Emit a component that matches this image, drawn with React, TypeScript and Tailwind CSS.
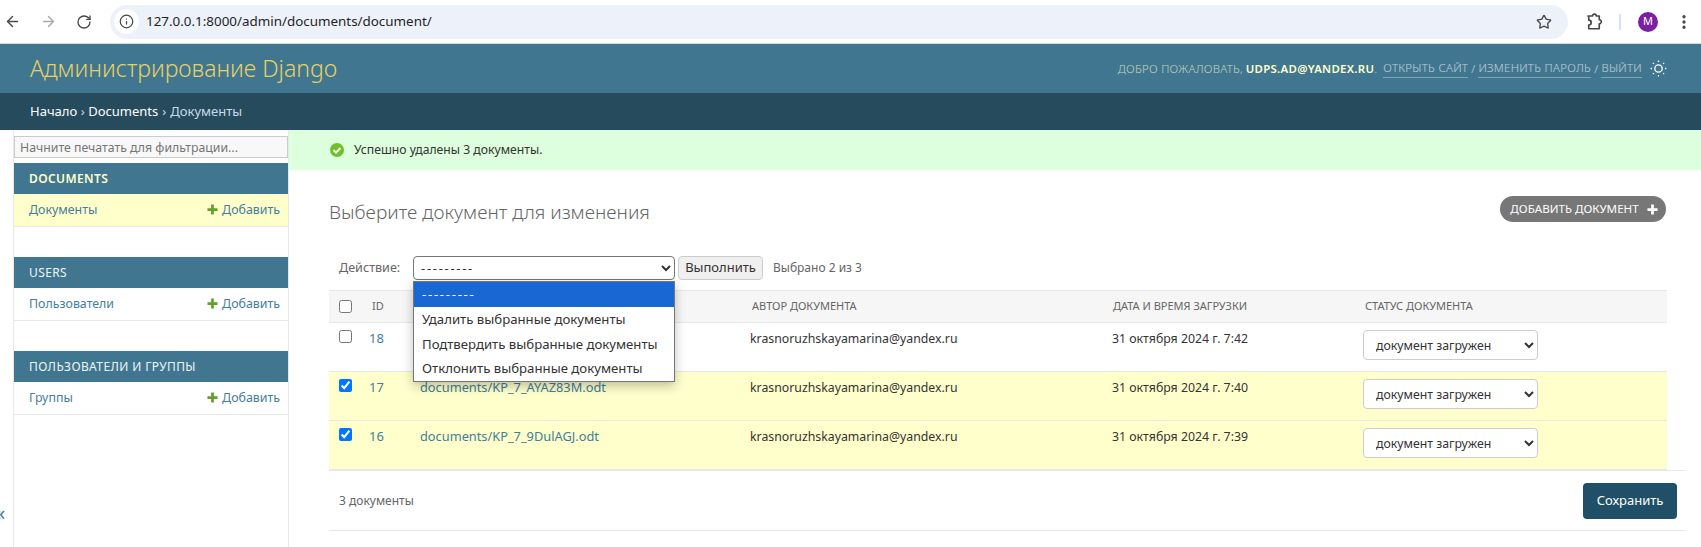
import { ArrowLeft, ArrowRight, RotateCw, Info, Star, MoreVertical } from 'lucide-react';

const rows = [
  { id: 18, file: '', date: '31 октября 2024 г. 7:42', checked: false },
  { id: 17, file: 'documents/KP_7_AYAZ83M.odt', date: '31 октября 2024 г. 7:40', checked: true },
  { id: 16, file: 'documents/KP_7_9DulAGJ.odt', date: '31 октября 2024 г. 7:39', checked: true },
];

const sections = [
  { title: 'DOCUMENTS', model: 'Документы', active: true },
  { title: 'USERS', model: 'Пользователи', active: false },
  { title: 'ПОЛЬЗОВАТЕЛИ И ГРУППЫ', model: 'Группы', active: false },
];

function PlusIcon({ color, size = 11 }: { color: string; size?: number }) {
  return (
    <svg width={size} height={size} viewBox="0 0 12 12" className="shrink-0">
      <path d="M4.5 0.5h3v4h4v3h-4v4h-3v-4h-4v-3h4z" fill={color} />
    </svg>
  );
}

function ExtensionIcon() {
  return (
    <svg width="18" height="18" viewBox="0 0 24 24" fill="none" stroke="currentColor" strokeWidth="2.2" strokeLinejoin="round" className="ml-[17px]">
      <path d="M4 4h6a2.5 2.5 0 0 1 5 0h4v5a2.5 2.5 0 0 1 0 5.5V21H5v-5a3 3 0 0 0 0-6.5V5z" />
    </svg>
  );
}

function ThemeIcon() {
  return (
    <svg width="17" height="17" viewBox="0 0 17 17" fill="none" className="ml-[8px]">
      <circle cx="8.5" cy="8.5" r="3.7" stroke="#ffffff" strokeWidth="1.3" />
      <path
        d="M8.5 0.6v1.4M8.5 15v1.4M0.6 8.5h1.4M15 8.5h1.4M2.9 2.9l1 1M13.1 13.1l1 1M2.9 14.1l1-1M13.1 3.9l1-1"
        stroke="#ffffff"
        strokeWidth="1.3"
      />
    </svg>
  );
}

function BrowserBar() {
  return (
    <div className="flex h-[44px] items-center border-b border-[#d3dbe3] bg-white pl-[3px] text-[#474747]">
      <ArrowLeft className="ml-[1px] h-[17px] w-[17px]" strokeWidth={2} />
      <ArrowRight className="ml-[19px] h-[17px] w-[17px] text-[#a9a9a9]" strokeWidth={2} />
      <RotateCw className="ml-[19px] h-[16px] w-[16px]" strokeWidth={2} />
      <div className="ml-[18px] flex h-[34px] w-[1458px] items-center rounded-full bg-[#edf2fa] pl-[4px] pr-[16px]">
        <div className="flex h-[25px] w-[25px] items-center justify-center rounded-full bg-white">
          <Info className="h-[15px] w-[15px]" strokeWidth={2} />
        </div>
        <span className="ml-[7px] text-[13.4px] text-[#1f1f1f]">127.0.0.1:8000/admin/documents/document/</span>
        <Star className="ml-auto h-[16px] w-[16px]" strokeWidth={2} />
      </div>
      <ExtensionIcon />
      <div className="ml-[16px] h-[16px] w-[2px] bg-[#d3e3fd]" />
      <div className="ml-[17px] flex h-[20px] w-[20px] items-center justify-center rounded-full bg-[#7b1fa2] text-[11px] text-white">
        M
      </div>
      <MoreVertical className="ml-[17px] h-[18px] w-[18px]" strokeWidth={2.4} />
    </div>
  );
}

function Header() {
  return (
    <>
      <div className="flex h-[49px] items-center justify-between bg-[#417690] pl-[30px] pr-[34px]">
        <span className="text-[23px] font-light text-[#e6d264]">Администрирование Django</span>
        <div className="flex items-center text-[11.4px] font-light uppercase tracking-[0.3px] text-[#ffffcc]/70">
          <span>Добро пожаловать, </span>
          <strong className="ml-[3px] font-semibold text-[#ffffcc]">udps.ad@yandex.ru</strong>
          <span>.</span>
          <a className="ml-[6px] border-b border-[#ffffff55] text-white/65">Открыть сайт</a>
          <span className="mx-[3px] text-white/65">/</span>
          <a className="border-b border-[#ffffff55] text-white/65">Изменить пароль</a>
          <span className="mx-[3px] text-white/65">/</span>
          <a className="border-b border-[#ffffff55] text-white/65">Выйти</a>
          <ThemeIcon />
        </div>
      </div>
      <div className="flex h-[37px] items-center bg-[#264b5d] pl-[30px] pt-[1px] text-[13px] text-white">
        <span>Начало</span>
        <span className="mx-[3.5px] text-[#c4dce8]">›</span>
        <span>Documents</span>
        <span className="mx-[4px] text-[#c4dce8]">›</span>
        <span className="text-[#c4dce8]">Документы</span>
      </div>
    </>
  );
}

function Sidebar() {
  return (
    <aside className="flex">
      <div className="flex w-[13px] flex-col justify-end overflow-hidden pb-[24px] text-[20px] leading-none text-[#447e9b]">
        <span className="-ml-[5px]">«</span>
      </div>
      <div className="h-full w-[276px] border-x border-[#e8e8e8] pt-[6px]">
        <input
          placeholder="Начните печатать для фильтрации..."
          className="block h-[22px] w-full border border-[#cccccc] bg-[#f8f8f8] px-[5px] text-[12.3px] text-[#333] placeholder:text-[#757575]"
        />
        <div className="mt-[5px] flex flex-col gap-[30px]">
          {sections.map((s) => (
            <div key={s.title}>
              <div
                className={`flex h-[31px] items-center bg-[#417690] pl-[15px] text-[12px] tracking-[0.4px] ${
                  s.active ? 'font-semibold text-[#ffffcc]' : 'text-[#eef5f8]'
                }`}
              >
                {s.title}
              </div>
              <div
                className={`flex h-[33px] items-center justify-between border-b border-[#e8e8e8] pl-[15px] pr-[8px] text-[12.4px] text-[#447e9b] ${
                  s.active ? 'bg-[#ffffcc]' : 'bg-white'
                }`}
              >
                <span>{s.model}</span>
                <span className="flex items-center gap-[4px]">
                  <PlusIcon color="#5fa225" />
                  Добавить
                </span>
              </div>
            </div>
          ))}
        </div>
      </div>
    </aside>
  );
}

function ActionBar() {
  return (
    <div className="flex h-[24px] items-center pl-[10px] text-[12.6px] text-[#666]">
      <label className="w-[74px]">Действие:</label>
      <div className="relative">
        <select className="h-[24px] w-[262px] rounded-[4px] border border-[#767676] bg-white pl-[3px] text-[13px] tracking-[1.7px] text-[#333]">
          <option>---------</option>
        </select>
        <div className="absolute left-0 top-[25px] z-10 w-[262px] border border-[#767676] bg-white text-[13.2px] text-[#333] shadow-[0_4px_10px_rgba(0,0,0,0.25)]">
          <div className="flex h-[25px] items-center bg-[#1967d2] pl-[8px] tracking-[1.7px] text-white">---------</div>
          <div className="flex h-[25px] items-center pl-[8px]">Удалить выбранные документы</div>
          <div className="flex h-[25px] items-center pl-[8px]">Подтвердить выбранные документы</div>
          <div className="flex h-[24px] items-center pl-[8px]">Отклонить выбранные документы</div>
        </div>
      </div>
      <button className="ml-[3px] h-[24px] w-[85px] rounded-[4px] border border-[#cccccc] bg-[#f0f0f0] text-[13px] text-[#333]">
        Выполнить
      </button>
      <span className="ml-[10px] text-[12px] text-[#666]">Выбрано 2 из 3</span>
    </div>
  );
}

function ResultTable() {
  return (
    <table className="mt-[10px] w-[1338px] table-fixed border-collapse text-[12.3px] text-[#333]">
      <thead>
        <tr className="h-[32px] border-y border-[#e8e8e8] bg-[#f6f6f6] text-left text-[11px] uppercase text-[#666]">
          <th className="w-[33px] pl-[10px] font-normal">
            <input type="checkbox" className="block h-[13px] w-[13px]" />
          </th>
          <th className="w-[59px] pl-[10px] font-normal">ID</th>
          <th className="w-[331px] pl-[10px] font-normal" />
          <th className="w-[360px] font-normal">Автор документа</th>
          <th className="w-[251px] pl-[1px] font-normal">Дата и время загрузки</th>
          <th className="pl-[2px] font-normal">Статус документа</th>
        </tr>
      </thead>
      <tbody>
        {rows.map((r) => (
          <tr key={r.id} className={`h-[49px] border-b border-[#e8e8e8] align-top ${r.checked ? 'bg-[#ffffcc]' : 'bg-white'}`}>
            <td className="pl-[10px] pt-[7px]">
              <input type="checkbox" defaultChecked={r.checked} className="block h-[13px] w-[13px]" />
            </td>
            <td className="pl-[7px] pt-[6px] text-[13px] text-[#447e9b]">{r.id}</td>
            <td className="pt-[6px] text-[12.8px] text-[#447e9b]">
              <span className="-ml-[1px] block">{r.file}</span>
            </td>
            <td className="pt-[7px]">
              <span className="-ml-[2px] block">krasnoruzhskayamarina@yandex.ru</span>
            </td>
            <td className="pt-[7px]">{r.date}</td>
            <td className="pt-[7px]">
              <select className="h-[30px] w-[175px] rounded-[4px] border border-[#cccccc] bg-white pl-[8px] text-[12.3px] text-[#333]">
                <option>документ загружен</option>
              </select>
            </td>
          </tr>
        ))}
      </tbody>
    </table>
  );
}

export default function App() {
  return (
    <div className="flex h-[547px] flex-col overflow-hidden bg-white font-['Noto_Sans',sans-serif]">
      <BrowserBar />
      <Header />
      <div className="flex min-h-0 flex-1">
        <Sidebar />
        <main className="min-w-0 flex-1">
          <div className="flex h-[40px] items-center gap-[10px] bg-[#ddffdd] pl-[41px] text-[12.2px] text-[#333]">
            <svg width="14" height="14" viewBox="0 0 14 14">
              <circle cx="7" cy="7" r="7" fill="#70bf2b" />
              <path d="M3.6 7.2l2.4 2.4 4.4-4.6" stroke="#fff" strokeWidth="2" fill="none" />
            </svg>
            <span className="pt-[1px]">Успешно удалены 3 документы.</span>
          </div>
          <div className="pl-[40px] pr-[15px]">
            <div className="flex h-[86px] items-center justify-between pb-[8px] pr-[20px]">
              <h1 className="pt-[6px] text-[19.1px] font-light text-[#666]">Выберите документ для изменения</h1>
              <a className="flex h-[26px] w-[166px] items-center justify-center gap-[8px] rounded-full bg-[#777777] pl-[2px] text-[11.6px] uppercase text-white">
                Добавить документ
                <PlusIcon color="#ffffff" />
              </a>
            </div>
            <ActionBar />
            <ResultTable />
            <div className="flex h-[61px] items-center justify-between border-y border-[#e8e8e8] pl-[10px] pr-[9px] text-[12px] text-[#666]">
              <span>3 документы</span>
              <button className="h-[36px] w-[94px] rounded-[4px] bg-[#205067] text-[13px] text-white">Сохранить</button>
            </div>
          </div>
        </main>
      </div>
    </div>
  );
}
